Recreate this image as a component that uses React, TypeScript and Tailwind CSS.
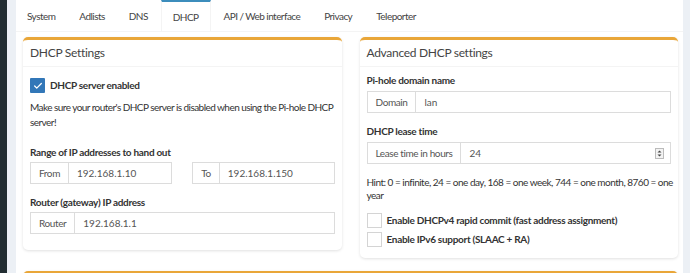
import { Check } from "lucide-react";

const tabs = ["System", "Adlists", "DNS", "DHCP", "API / Web interface", "Privacy", "Teleporter"];

function Tabs() {
  return (
    <ul className="flex h-[32px] border-b border-[#f4f4f4] pl-0 tracking-[-0.55px]">
      {tabs.map((t) => (
        <li
          key={t}
          className={
            t === "DHCP"
              ? "mr-[2px] flex items-center px-[11px] pt-[2px] border-t-2 border-x border-t-[#3c8dbc] border-x-[#f4f4f4] text-[#444]"
              : "mr-[2px] flex items-center px-[11px] pt-[2px] text-[#444]"
          }
        >
          {t}
        </li>
      ))}
    </ul>
  );
}

function InputGroup({ addon, value, spinner }: { addon: string; value: string; spinner?: boolean }) {
  return (
    <div className="flex h-[22px] border border-[#dcdcdc] text-[#555]">
      <div className="flex items-center px-[8px] border-r border-[#dcdcdc] tracking-[-0.4px]">{addon}</div>
      <div className="flex flex-1 items-center pl-[8px] pr-[6px] tracking-normal">
        <span className="flex-1">{value}</span>
        {spinner && (
          <svg width="9" height="11" viewBox="0 0 9 11">
            <rect x="0.5" y="0.5" width="8" height="10" fill="#f3f3f3" stroke="#bbb" />
            <path d="M2.5 4.5 L4.5 2.5 L6.5 4.5 Z" fill="#444" />
            <path d="M2.5 6.5 L4.5 8.5 L6.5 6.5 Z" fill="#444" />
          </svg>
        )}
      </div>
    </div>
  );
}

function Box({ title, children }: { title: string; children: React.ReactNode }) {
  return (
    <div className="rounded-[5px] border-t-[3px] border-[#e9a638] bg-white shadow-[0_1px_3px_rgba(0,0,0,0.12)]">
      <div className="h-[27px] flex items-center px-[7px] border-b border-[#f4f4f4] text-[12px] tracking-[-0.3px] text-[#444]">
        {title}
      </div>
      {children}
    </div>
  );
}

function CheckRow({ checked, label }: { checked?: boolean; label: string }) {
  return (
    <div className="flex items-center gap-[5px] h-[15px]">
      {checked ? (
        <span className="flex w-[15px] h-[15px] items-center justify-center bg-[#3277b8] rounded-[1px]">
          <Check className="w-[10px] h-[10px] text-white" strokeWidth={3} />
        </span>
      ) : (
        <span className="w-[15px] h-[15px] border border-[#d4d4d4] bg-white" />
      )}
      <span className="font-bold text-[#333]">{label}</span>
    </div>
  );
}

export default function App() {
  return (
    <div
      className="flex w-[690px] h-[273px] overflow-hidden bg-[#ecf0f5] text-[10px] tracking-[-0.3px] text-[#333]"
      style={{ fontFamily: "Lato, 'Open Sans', sans-serif" }}
    >
      <div className="w-[7px] shrink-0 bg-[#222d32]" />
      <div className="flex-1 pl-[9px] pr-[7px]">
        <div className="bg-white h-full">
          <Tabs />
          <div className="grid grid-cols-2 gap-[18px] items-start pl-[7px] pr-[5px] pt-[5px]">
            <Box title="DHCP Settings">
              <div className="px-[7px] pt-[11px] pb-[16px]">
                <CheckRow checked label="DHCP server enabled" />
                <p className="mt-[7px] mr-[-4px] leading-[15px] tracking-[-0.55px]">
                  Make sure your router's DHCP server is disabled when using the Pi-hole DHCP server!
                </p>
                <p className="mt-[15px] font-bold leading-[14px]">Range of IP addresses to hand out</p>
                <div className="mt-[3px] grid grid-cols-2 gap-[20px]">
                  <InputGroup addon="From" value="192.168.1.10" />
                  <InputGroup addon="To" value="192.168.1.150" />
                </div>
                <p className="mt-[11px] font-bold leading-[14px]">Router (gateway) IP address</p>
                <div className="mt-[3px]">
                  <InputGroup addon="Router" value="192.168.1.1" />
                </div>
              </div>
            </Box>
            <Box title="Advanced DHCP settings">
              <div className="px-[7px] pt-[6px] pb-[11px]">
                <p className="font-bold leading-[14px]">Pi-hole domain name</p>
                <div className="mt-[4px]">
                  <InputGroup addon="Domain" value="lan" />
                </div>
                <p className="mt-[11px] font-bold leading-[14px]">DHCP lease time</p>
                <div className="mt-[4px]">
                  <InputGroup addon="Lease time in hours" value="24" spinner />
                </div>
                <p className="mt-[12px] mr-[-6px] leading-[13px] tracking-[-0.5px]">
                  Hint: 0 = infinite, 24 = one day, 168 = one week, 744 = one month, 8760 = one year
                </p>
                <div className="mt-[11px] flex flex-col gap-[4px]">
                  <CheckRow label="Enable DHCPv4 rapid commit (fast address assignment)" />
                  <CheckRow label="Enable IPv6 support (SLAAC + RA)" />
                </div>
              </div>
            </Box>
            <div className="col-span-2 mt-[-5px] h-[20px] rounded-t-[5px] border-t-[3px] border-[#e9a638] bg-white shadow-[0_1px_3px_rgba(0,0,0,0.12)]" />
          </div>
        </div>
      </div>
    </div>
  );
}
